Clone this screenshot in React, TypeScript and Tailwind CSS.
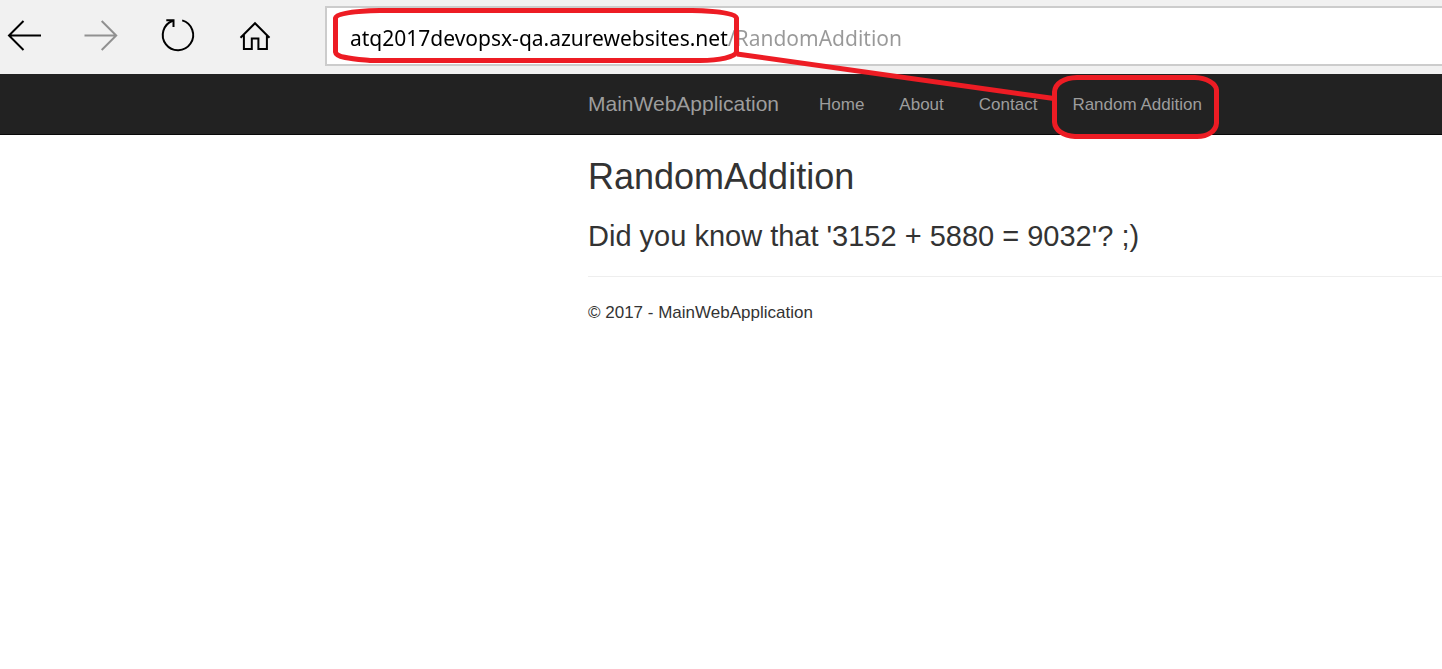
import type { ReactNode } from "react";

const links = ["Home", "About", "Contact", "Random Addition"];

function ToolButton({ label, disabled, children }: { label: string; disabled?: boolean; children: ReactNode }) {
  return (
    <button type="button" aria-label={label} disabled={disabled} className="h-10 w-[33px] text-black disabled:text-[#919191]">
      <svg viewBox="0 0 33 40" className="h-10 w-[33px] overflow-visible" fill="none" stroke="currentColor" strokeWidth="2" aria-hidden="true">
        {children}
      </svg>
    </button>
  );
}

function BrowserBar() {
  return (
    <header className="flex h-[74px] items-center bg-[#f1f1f1] pl-2">
      <div className="flex shrink-0 gap-11">
        <ToolButton label="Back">
          <path d="M15.5 4 1 18.5 15.5 33M1 18.5H33" />
        </ToolButton>
        <ToolButton label="Forward" disabled>
          <path d="M16.7 4 31.2 18.5 16.7 33M31.2 18.5H-.5" />
        </ToolButton>
        <ToolButton label="Refresh">
          <path d="M20.2 3.4A15.2 15.2 0 1 1 10.800 3.700" />
          <path d="M4.300 3.300H11.500V10" />
        </ToolButton>
        <ToolButton label="Home">
          <path d="M1.5 20.7 16 6.2 30.5 20.7M4.9 17.5V32H12.8V21.5H19.4V32H27.9V17.5" />
        </ToolButton>
      </div>
      <form className="mt-1.5 ml-[53px] h-[60px] min-w-0 grow self-start border-2 border-r-0 border-[#ccc] bg-white" onSubmit={(e) => e.preventDefault()}>
        <input
          type="text"
          aria-label="Address"
          spellCheck={false}
          defaultValue="atq2017devopsx-qa.azurewebsites.net/RandomAddition"
          className="ml-[23px] h-full w-[calc(100%-23px)] bg-[linear-gradient(to_right,#000_378px,#999_378px)] bg-clip-text pt-1 font-['Noto_Sans',sans-serif] text-[21px] text-transparent caret-black outline-none"
        />
      </form>
    </header>
  );
}

function Annotations() {
  return (
    <svg
      className="pointer-events-none absolute top-0 left-0 h-[145px] w-[1230px]"
      viewBox="0 0 1230 145"
      fill="none"
      stroke="#ed1c24"
      strokeWidth="5"
      strokeLinejoin="round"
      aria-hidden="true"
    >
      <path d="M380 10.5H692C716 11 736 13 736.5 18V52C735 57 720 60.500 700 60.500H370C354 59 336 58 335.500 52V18C336 13 356 11 380 10.500Z" />
      <path d="M737 54 1054 98.500" />
      <path d="M1077 77.500H1195C1206 78 1216 83 1216.500 90V123C1216 131 1208 136.500 1197 136.500H1075C1063 136 1055 130 1054.500 122V92C1055 83 1064 78 1077 77.500Z" />
    </svg>
  );
}

export default function App() {
  return (
    <div className="relative min-h-screen overflow-x-hidden bg-white font-['Liberation_Sans',Arial,sans-serif] text-[#333]">
      <BrowserBar />
      <nav className="flex h-[61px] items-center border-b border-[#080808] bg-[#222] pl-[588px] whitespace-nowrap text-[#9d9d9d]">
        <a href="#" className="w-[231px] shrink-0 text-[21px]">
          MainWebApplication
        </a>
        <ul className="flex gap-[35px] pt-0.5 text-[17px]">
          {links.map((link) => (
            <li key={link}>
              <a href="#">{link}</a>
            </li>
          ))}
        </ul>
      </nav>
      <main className="pt-[22px] pl-[588px]">
        <h2 className="text-[36px] leading-10">RandomAddition</h2>
        <h3 className="mt-[23px] text-[29px] leading-8">Did you know that '3152 + 5880 = 9032'? ;)</h3>
        <hr className="mt-6 border-[#eee]" />
        <footer className="mt-6 text-[17px] leading-6">
          <p>© 2017 - MainWebApplication</p>
        </footer>
      </main>
      <Annotations />
    </div>
  );
}
